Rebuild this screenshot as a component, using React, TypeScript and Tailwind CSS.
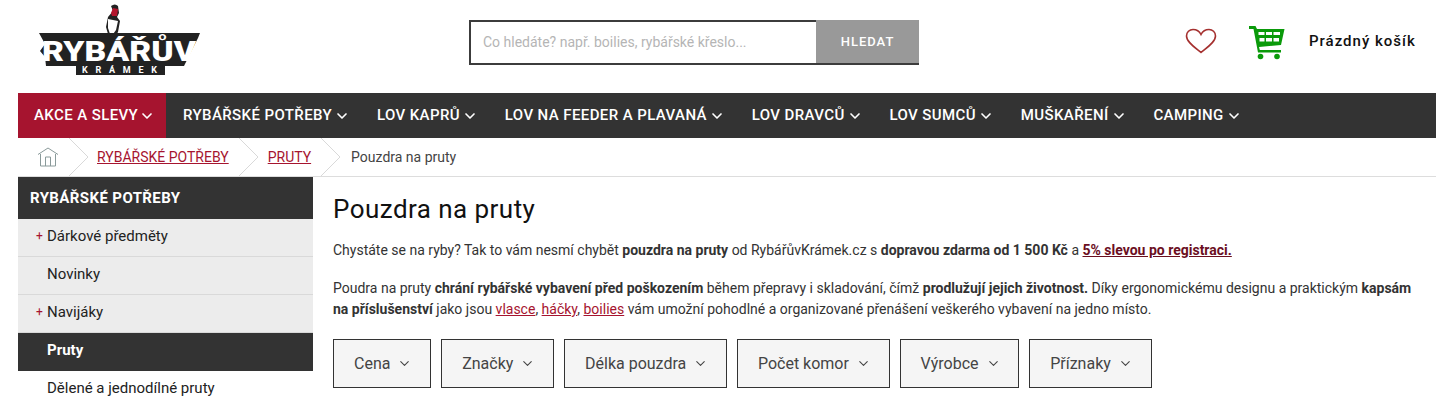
import { ChevronDown } from 'lucide-react';

const navItems = [
  'RYBÁŘSKÉ POTŘEBY',
  'LOV KAPRŮ',
  'LOV NA FEEDER A PLAVANÁ',
  'LOV DRAVCŮ',
  'LOV SUMCŮ',
  'MUŠKAŘENÍ',
  'CAMPING',
];

const filters = ['Cena', 'Značky', 'Délka pouzdra', 'Počet komor', 'Výrobce', 'Příznaky'];

function Logo() {
  return (
    <svg width="164" height="78" viewBox="0 0 164 78" className="block">
      <path d="M73 6q4-3 7 0l1 7-2 4 3 4-2 11-5 9h-3l-4-14 2-10 5-6z" fill="#222" />
      <path d="M75 8l5 1-1 7h-5l-1-3z" fill="#b3142c" />
      <path d="M70 19l10 2-2 9-5 7-3-9z" fill="#fff" />
      <path d="M1 33H162L160 38 146 66H127V75H38V66H8L7 57 2 51 7 44z" fill="#222" />
      <text x="4" y="61" fontSize="28" fontWeight="900" fill="#fff" textLength="154" lengthAdjust="spacingAndGlyphs" fontFamily="Roboto, sans-serif">RYBÁŘŮV</text>
      <text x="44" y="72.500" fontSize="9" fontWeight="700" fill="#fff" textLength="75" fontFamily="Roboto, sans-serif">KRÁMEK</text>
    </svg>
  );
}

function Heart() {
  return (
    <svg width="32" height="26" viewBox="0 0 32 26" fill="none" stroke="#a5302f" strokeWidth="1.6">
      <path d="M16 24.500C10 19.500 1.500 14 1.500 8 1.500 4 4.500 1.500 8 1.500c3.500 0 6.500 2 8 5 1.500-3 4.500-5 8-5 3.500 0 6.500 2.500 6.500 6.500 0 6-8.500 11.500-14.500 16.500z" />
    </svg>
  );
}

function Cart() {
  return (
    <svg width="37" height="35" viewBox="0 0 37 35">
      <path d="M1 1h6.500l1.500 3h27.500l-3.500 16-22 2 .8 3H33v2.500H10L5.500 4H1z" fill="#0a9a0a" />
      <path d="M10.500 7h6v3h-6zM18 7h6v3h-6zM25.500 7h6.500v3h-6.500zM11.500 13h5v3.500h-5zM18 13h6v3.500h-6zM25.500 13h5.500v3.500h-5.500z" fill="#fff" />
      <circle cx="12.500" cy="31.500" r="2.800" fill="#0a9a0a" />
      <circle cx="29" cy="31.500" r="2.800" fill="#0a9a0a" />
    </svg>
  );
}

function HomeIcon() {
  return (
    <svg width="22" height="20" viewBox="0 0 22 20" fill="none" stroke="#8a9a9a" strokeWidth="1">
      <path d="M1 7.500L11 1l10 6.500" />
      <path d="M3.500 7v12h15V7" />
      <path d="M8.500 19v-9h5v9" />
    </svg>
  );
}

function Crumb() {
  return (
    <svg width="26" height="38" viewBox="0 0 26 38" fill="none" stroke="#d9d9d9" strokeWidth="1" className="shrink-0">
      <path d="M1 0l19 19L1 38" />
    </svg>
  );
}

function SideRow({ text, plus }: { text: string; plus?: boolean }) {
  return (
    <div className="relative flex h-[38px] items-center border-b border-[#d9d9d9] bg-[#ececec] pb-[3px] pl-[29px] text-[15px] text-[#222]">
      {plus && <span className="absolute left-[18px] text-[12px] text-[#a6142f]">+</span>}
      {text}
    </div>
  );
}

export default function App() {
  return (
    <div className="w-[1449px] h-[400px] overflow-hidden bg-white font-['Roboto',sans-serif] text-[#333]">
      <header className="h-[93px] flex items-start">
        <div className="ml-[38px] w-[164px]">
          <Logo />
        </div>
        <div className="ml-[267px] mt-[20px] flex h-[45px] w-[450px]">
          <div className="flex flex-1 items-center border-2 border-r-0 border-[#3c3c3c] pl-[12px] text-[14px] text-[#b5b5b5]">
            Co hledáte? např. boilies, rybářské křeslo...
          </div>
          <div className="flex w-[103px] items-center justify-center border-b-2 border-[#3c3c3c] bg-[#999] text-[13px] font-medium tracking-[1px] text-white">
            HLEDAT
          </div>
        </div>
        <div className="ml-[266px] mt-[28px]">
          <Heart />
        </div>
        <div className="ml-[31px] mt-[25px]">
          <Cart />
        </div>
        <div className="ml-[24px] mt-[30px] text-[15px] font-medium tracking-[1px] text-[#111]">Prázdný košík</div>
      </header>

      <nav className="mx-[18px] w-[1418px] h-[45px] flex bg-[#333] text-[15px] font-medium tracking-[0.4px] text-white">
        <div className="flex w-[148px] items-center bg-[#a6142f] pl-[16px]">
          AKCE A SLEVY
          <ChevronDown size={16} strokeWidth={2.5} className="ml-[1px]" />
        </div>
        <div className="flex items-center gap-[26.8px] pl-[17px]">
          {navItems.map((item) => (
            <div key={item} className="flex items-center gap-[2px] whitespace-nowrap">
              {item}
              <ChevronDown size={16} strokeWidth={2.5} />
            </div>
          ))}
        </div>
      </nav>

      <div className="ml-[18px] w-[1418px] h-[39px] flex items-center border-b border-[#ddd] text-[14px]">
        <div className="ml-[19px] w-[22px]">
          <HomeIcon />
        </div>
        <div className="ml-[9px]">
          <Crumb />
        </div>
        <span className="ml-[3px] text-[#a6142f] underline">RYBÁŘSKÉ POTŘEBY</span>
        <div className="ml-[9px]">
          <Crumb />
        </div>
        <span className="ml-[4px] text-[#a6142f] underline">PRUTY</span>
        <div className="ml-[9px]">
          <Crumb />
        </div>
        <span className="ml-[5px] text-[#444]">Pouzdra na pruty</span>
      </div>

      <div className="ml-[18px] flex">
        <aside className="w-[295px] shrink-0">
          <div className="flex h-[42px] items-center bg-[#333] pl-[12px] text-[15px] font-bold tracking-[0.4px] text-white">RYBÁŘSKÉ POTŘEBY</div>
          <SideRow plus text="Dárkové předměty" />
          <SideRow text="Novinky" />
          <SideRow plus text="Navijáky" />
          <div className="flex h-[38px] items-center bg-[#333] pb-[4px] pl-[29px] text-[15px] font-bold text-white">Pruty</div>
          <div className="flex h-[38px] items-center pb-[4px] pl-[29px] text-[15px] text-[#222]">Dělené a jednodílné pruty</div>
        </aside>

        <main className="ml-[20px] w-[1090px] text-[14px] leading-[21px]">
          <h1 className="mt-[15px] text-[26px] leading-[34px] tracking-[0.45px] text-[#111]">Pouzdra na pruty</h1>
          <p className="mt-[14px]">
            Chystáte se na ryby? Tak to vám nesmí chybět <b>pouzdra na pruty</b> od RybářůvKrámek.cz s <b>dopravou zdarma od 1 500 Kč</b> a{' '}
            <b className="text-[#6b0f1f] underline">5% slevou po registraci.</b>
          </p>
          <p className="mt-[17px]">
            Poudra na pruty <b>chrání rybářské vybavení před poškozením</b> během přepravy i skladování, čímž <b>prodlužují jejich životnost.</b> Díky ergonomickému designu a praktickým <b>kapsám na příslušenství</b> jako jsou{' '}
            <span className="text-[#a6142f] underline">vlasce</span>, <span className="text-[#a6142f] underline">háčky</span>, <span className="text-[#a6142f] underline">boilies</span> vám umožní pohodlné a organizované přenášení veškerého vybavení na jedno místo.
          </p>
          <div className="mt-[19px] flex gap-[10px]">
            {filters.map((f) => (
              <div key={f} className="flex h-[49px] items-center gap-[7px] border border-[#333] bg-[#f5f5f5] pl-[20px] pr-[17.7px] text-[16px] text-[#444]">
                {f}
                <ChevronDown size={15} strokeWidth={1.75} />
              </div>
            ))}
          </div>
        </main>
      </div>
    </div>
  );
}
